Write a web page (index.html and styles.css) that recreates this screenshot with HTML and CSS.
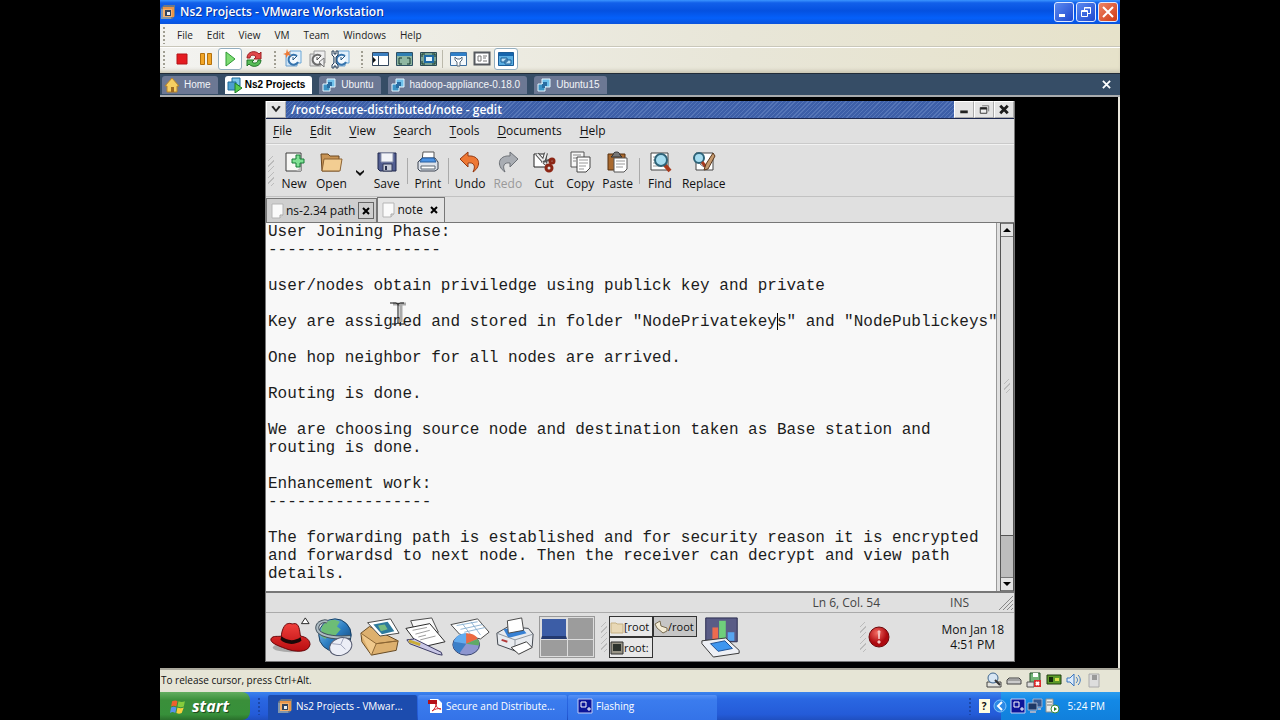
FILE: index.html
```html
<!DOCTYPE html>
<html lang="en">
<head>
<meta charset="utf-8">
<title>Ns2 Projects - VMware Workstation</title>
<link rel="stylesheet" href="styles.css">
</head>
<body>
<svg class="defs" aria-hidden="true">
  <defs>
    <symbol id="vmware" viewBox="0 0 16 16"><path d="M1 4 4 1h11v11l-3 3H1z" fill="#6a788a"/><path d="M3 3h11v10H3z" fill="#e8954a"/><path d="M1 5h10v10H1z" fill="#8296ab"/><path d="M3 5h9v8H3z" fill="#f4b06c"/><path d="M5 6h6v6H5z" fill="#33435c"/><path d="M7 8h3v3H7z" fill="#e9eef4"/></symbol>
    <symbol id="vm" viewBox="0 0 16 16"><path d="M6 2h8v8H6z" fill="#6fc0ea" stroke="#e6f6ff"/><path d="M2 7h7v7H2z" fill="#3b93c4" stroke="#e6f6ff"/><path d="M7 5h4v4H9v2H6V7h1z" fill="#2a6da2"/></symbol>
    <symbol id="snap" viewBox="0 0 20 20"><path d="M3 5h11v12H3z" fill="#cfe4f5" stroke="#6a9fce"/><path d="M7 2h11v12H7z" fill="#e4f1fb" stroke="#68a5d6"/><path d="M14 7a5 5 0 1 0 1 6" fill="#f4faff" stroke="#3674ad" stroke-width="2"/><path d="M10 8v3l4-4" fill="none" stroke="#28577f"/></symbol>
    <symbol id="page" viewBox="0 0 14 16"><path d="M2 1h11v11l-3 3H2z" fill="#fafafa" stroke="#b5b5b5"/><path d="M10 15v-3h3" fill="#ddd" stroke="#aaa"/></symbol>
    <symbol id="flash" viewBox="0 0 16 16"><path d="M1 1h14v14H1z" fill="#0c1599" stroke="#c3cdf5"/><path d="M4 4h5v5H4zM11 10h2v2h-2z" fill="none" stroke="#fff"/></symbol>
    <linearGradient id="ball" x1="0" y1="0" x2="1" y2="1"><stop offset="0" stop-color="#9cd6f5"/><stop offset=".5" stop-color="#2d7ec2"/><stop offset="1" stop-color="#0d3768"/></linearGradient>
    <linearGradient id="felt" x1="0" y1="0" x2="0" y2="1"><stop offset="0" stop-color="#f0403c"/><stop offset="1" stop-color="#b90d10"/></linearGradient>
    <radialGradient id="alert" cx=".4" cy=".3"><stop offset="0" stop-color="#f36a62"/><stop offset="1" stop-color="#ad0a10"/></radialGradient>
  </defs>
</svg>

<main class="host">
  <header class="titlebar">
    <svg class="i16"><use href="#vmware"/></svg>
    <h1 class="titlebar-text">Ns2 Projects - VMware Workstation</h1>
    <div class="captions">
      <button class="caption" aria-label="Minimize"><svg viewBox="0 0 18 18"><path d="M4 11h6v3H4z" fill="#fff"/></svg></button>
      <button class="caption" aria-label="Restore"><svg viewBox="0 0 18 18" fill="none" stroke="#fff"><path d="M7.5 8V4.500h6v6H11M7 5h7"/><path d="M4.500 7.500h6v6h-6zM4 8.500h7"/></svg></button>
      <button class="caption caption-close" aria-label="Close"><svg viewBox="0 0 18 18"><path d="m4 4 10 10m0-10-10 10" stroke="#fff" stroke-width="2"/></svg></button>
    </div>
  </header>

  <nav class="menubar" aria-label="VMware menu">
    <i class="dots"></i>
    <button>File</button><button>Edit</button><button>View</button><button>VM</button><button>Team</button><button>Windows</button><button>Help</button>
  </nav>

  <div class="tools" role="toolbar" aria-label="VMware toolbar">
    <i class="dots"></i>
    <div class="tool-group">
      <button class="tool" aria-label="Power off"><svg viewBox="0 0 20 20"><path d="M5 5h10v10H5z" fill="#e51b20" stroke="#b41216"/></svg></button>
      <button class="tool" aria-label="Suspend"><svg viewBox="0 0 20 20" fill="#f2a628" stroke="#b4720e"><path d="M4.500 4.500h4v11h-4zM11.500 4.500h4v11h-4z"/></svg></button>
      <button class="tool tool-on" aria-label="Power on"><svg viewBox="0 0 20 20"><path d="m6 3 9 7-9 7z" fill="#7fdc74" stroke="#2f9a35"/></svg></button>
      <button class="tool" aria-label="Reset"><svg viewBox="0 0 20 20"><path d="M3 9c0-7 9-8 12-4l2-2v7h-7l2-2C10 5 6 6 6 9z" fill="#e1474a" stroke="#9c2023"/><path d="M17 11c0 7-9 8-12 4l-2 2v-6h7l-2 2c2 2 6 1 6-2z" fill="#58bd58" stroke="#23752a"/></svg></button>
    </div>
    <i class="dots"></i>
    <div class="tool-group">
      <button class="tool" aria-label="Take snapshot"><svg viewBox="0 0 20 20"><use href="#snap"/><path d="m4 0 1 3 3-1-2 2 2 3-3-1-2 3V6L0 5l3-1z" fill="#ee7a35"/></svg></button>
      <button class="tool tool-off" aria-label="Revert snapshot"><svg viewBox="0 0 20 20"><use href="#snap"/><path d="m12 13 5-4v9z" fill="#eee" stroke="#777"/></svg></button>
      <button class="tool" aria-label="Manage snapshots"><svg viewBox="0 0 20 20"><use href="#snap"/><path d="M1 2v4l2 2v6l-2 2v3h2v-2h2v2h2v-3l-2-2V8l2-2V2H5v3H3V2z" fill="#eef3f8" stroke="#2b4058"/></svg></button>
    </div>
    <i class="dots"></i>
    <div class="tool-group">
      <button class="tool" aria-label="Sidebar"><svg viewBox="0 0 20 20"><path d="M2.500 3.500h16v13h-16z" fill="#fff" stroke="#34475c"/><path d="M3 4h15v3H3z" fill="#3b7fc0"/><path d="M8.500 7v9" stroke="#34475c"/><path d="m3 8 3 3-3 3z" fill="#111"/></svg></button>
      <button class="tool" aria-label="Quick switch"><svg viewBox="0 0 20 20"><path d="M2.500 3.500h16v13h-16z" fill="#8fb7a2" stroke="#2f5062"/><path d="M3 4h15v3H3z" fill="#2f7fb2"/><path d="M5 12V9h3m5 0h3v3m0 0v3h-3m-5 0H5v-3" fill="none" stroke="#17382f"/></svg></button>
      <button class="tool" aria-label="Full screen"><svg viewBox="0 0 20 20"><path d="M2.500 3.500h16v13h-16z" fill="#7ba494" stroke="#2b4a55"/><path d="M7 7h8v6H7z" fill="#e6f4fb" stroke="#1e6aa5" stroke-width="2"/><path d="M4 8V5h3m7 0h3v3m0 4v3h-3m-7 0H4v-3" fill="none" stroke="#17382f"/></svg></button>
    </div>
    <i class="rule"></i>
    <div class="tool-group">
      <button class="tool" aria-label="Settings"><svg viewBox="0 0 20 20"><path d="M2.500 3.500h16v13h-16z" fill="#f3f8fc" stroke="#3b6ea0"/><path d="M3 4h15v3H3z" fill="#2f7fc8"/><path d="M7 8v3l2 2v4h3v-4l2-2V8l-2 2H9z" fill="#fff" stroke="#57697b"/></svg></button>
      <button class="tool" aria-label="Console"><svg viewBox="0 0 20 20"><path d="M2.500 3.500h15v12h-15z" fill="#fff" stroke="#55595e" stroke-width="2"/><path d="M6 7h3v5H6zM11 7h4M11 9h3M11 12h4" fill="none" stroke="#777"/></svg></button>
      <button class="tool tool-on" aria-label="Unity"><svg viewBox="0 0 20 20"><path d="M2.500 3.500h15v13h-15z" fill="#5aaee2" stroke="#1b5d98"/><path d="M3 4h14v3H3z" fill="#1565ad"/><path d="M5 9h6v4H5zM9 11h6v4H9z" fill="#b9e0f7" stroke="#175a94"/></svg></button>
    </div>
  </div>

  <nav class="vmtabs" aria-label="Virtual machines">
    <button class="vmtab"><svg class="i16" viewBox="0 0 16 16"><path d="M1 9 8 1l7 8h-2v6H3V9z" fill="#f6cf62" stroke="#b8832a"/><path d="M7 10h3v5H7z" fill="#a06c22"/></svg>Home</button>
    <button class="vmtab vmtab-on"><svg class="i16" viewBox="0 0 16 16"><path d="M5 1h8v8H5z" fill="#7cc6ea" stroke="#1f6a9a"/><path d="M1 5h8v8H1z" fill="#4c9fd0" stroke="#1f6a9a"/><path d="m8 6 7 5-7 5z" fill="#58cc4c" stroke="#1c7a25"/></svg>Ns2 Projects</button>
    <button class="vmtab vmtab-vm"><svg class="i16"><use href="#vm"/></svg>Ubuntu</button>
    <button class="vmtab vmtab-vm"><svg class="i16"><use href="#vm"/></svg>hadoop-appliance-0.18.0</button>
    <button class="vmtab vmtab-vm"><svg class="i16"><use href="#vm"/></svg>Ubuntu15</button>
    <button class="vmtabs-close" aria-label="Close tab"><svg viewBox="0 0 10 10"><path d="m1 1 8 8m0-8-8 8" stroke="#fff" stroke-width="2"/></svg></button>
  </nav>

  <div class="screen">
    <section class="guest">
      <header class="gtitle">
        <button class="gbtn" aria-label="Window menu"><svg viewBox="0 0 16 16"><path d="m3 5 5 6 5-6-2-1-3 4-3-4z" fill="#222"/></svg></button>
        <h2 class="gtitle-text">/root/secure-distributed/note - gedit</h2>
        <button class="gbtn" aria-label="Minimize window"><svg viewBox="0 0 16 16"><path d="M4 9h8v3H4z" fill="#222"/></svg></button>
        <button class="gbtn" aria-label="Restore window"><svg viewBox="0 0 16 16"><path d="M6 4h7v6" fill="none" stroke="#777"/><path d="M4 6h7v6H4z" fill="#eee" stroke="#333"/><path d="M4 6h7v2H4z" fill="#222"/></svg></button>
        <button class="gbtn" aria-label="Close window"><svg viewBox="0 0 16 16"><path d="m4 4 8 8m0-8-8 8" stroke="#1c1c1c" stroke-width="3"/></svg></button>
      </header>

      <nav class="gmenu" aria-label="gedit menu">
        <button><u>F</u>ile</button><button><u>E</u>dit</button><button><u>V</u>iew</button><button><u>S</u>earch</button><button><u>T</u>ools</button><button><u>D</u>ocuments</button><button><u>H</u>elp</button>
      </nav>

      <div class="gtools" role="toolbar" aria-label="gedit toolbar">
        <i class="hatch"></i>
        <button class="gtool"><svg viewBox="0 0 24 24"><path d="M4 3h15v18H4z" fill="#f8f8f6" stroke="#3c3c3c"/><path d="M19 17v4h-5z" fill="#bbb"/><path d="M14 5h4v4h4v4h-4v4h-4v-4h-4V9h4z" fill="#7fe093" stroke="#167a36"/></svg>New</button>
        <button class="gtool"><svg viewBox="0 0 24 24"><path d="M2 4h7l2 2h9v15H3z" fill="#c89455" stroke="#6c4820"/><path d="M5 9h18l-2 12H3z" fill="#f2cd92" stroke="#8c6232"/></svg>Open</button>
        <button class="gdrop" aria-label="Recent files"><svg viewBox="0 0 10 24"><path d="m1 13 4 4 4-4v-2l-4 3-4-3z" fill="#111"/></svg></button>
        <button class="gtool"><svg viewBox="0 0 24 24"><path d="M3 3h18v18H5l-2-2z" fill="#535f92" stroke="#20284c"/><path d="M6 3h12v9H6z" fill="#f2f4f8" stroke="#8b93ab"/><path d="M8 14h9v7H8z" fill="#c7ccd8" stroke="#333b5b"/><path d="M10 16h2v4h-2z" fill="#28304e"/></svg>Save</button>
        <i class="grule"></i>
        <button class="gtool"><svg viewBox="0 0 24 24"><path d="M7 2h11v9H6z" fill="#fff" stroke="#555"/><path d="m2 12 4-4h13l3 4v7l-3 2H4l-2-2z" fill="#dde2ea" stroke="#3a4350"/><path d="M6 8h12l2 4H4z" fill="#4b93e4" stroke="#275d9e"/><path d="M5 16h14v3H5z" fill="#fff" stroke="#5b6672"/></svg>Print</button>
        <i class="grule"></i>
        <button class="gtool"><svg viewBox="0 0 24 24"><path d="M2 9 10 2v4c12-1 14 10 5 16 3-6 1-10-5-9v4z" fill="#ee7834" stroke="#923812"/></svg>Undo</button>
        <button class="gtool gtool-off"><svg viewBox="0 0 24 24"><path d="M22 9 14 2v4C2 5 0 16 9 22c-3-6-1-10 5-9v4z" fill="#a9adb3" stroke="#6d7177"/></svg>Redo</button>
        <button class="gtool"><svg viewBox="0 0 24 24"><path d="M2 4h12v13H2z" fill="#fff" stroke="#222"/><path d="m5 4 9 10M14 3l-3 10" stroke="#444" stroke-width="4"/><path d="m5 4 9 10M14 3l-3 10" stroke="#eee" stroke-width="2"/><path d="m11 12 9-3" stroke="#555" stroke-width="2"/><circle cx="17" cy="18" r="3" fill="none" stroke="#8c2615" stroke-width="3"/><circle cx="20" cy="11" r="2" fill="none" stroke="#8c2615" stroke-width="3"/></svg>Cut</button>
        <button class="gtool"><svg viewBox="0 0 24 24"><path d="M3 2h13v15H3z" fill="#f7f7f7" stroke="#555"/><path d="M5 5h8M5 8h4M5 11h3" stroke="#888"/><path d="M9 7h13v11l-4 4H9z" fill="#fff" stroke="#444"/><path d="M11 10h9M11 13h9M11 16h7M11 19h5" stroke="#999"/></svg>Copy</button>
        <button class="gtool"><svg viewBox="0 0 24 24"><path d="M2 4h17v16H2z" fill="#a9692e" stroke="#56300f"/><path d="M7 5c0-4 7-4 7 0l2 2H5z" fill="#777" stroke="#333"/><path d="M8 8h13v11l-3 3H8z" fill="#fff" stroke="#555"/><path d="M10 11h9M10 14h9M10 17h7" stroke="#999"/></svg>Paste</button>
        <i class="grule"></i>
        <button class="gtool"><svg viewBox="0 0 24 24"><path d="M3 3h17v17H3z" fill="#fff" stroke="#444"/><path d="M5 7h4M5 10h3M5 13h4M5 16h9" stroke="#999"/><path d="m16 14 6 7" stroke="#a83a1d" stroke-width="4"/><circle cx="13" cy="10" r="6" fill="#a5dcf0" stroke="#2e6378" stroke-width="2"/></svg>Find</button>
        <button class="gtool"><svg viewBox="0 0 24 24"><path d="M4 3h17v17H4z" fill="#fff" stroke="#444"/><path d="m8 14 4 3 3-3" fill="none" stroke="#666"/><circle cx="7" cy="8" r="5" fill="#a5dcf0" stroke="#2e6378" stroke-width="2"/><path d="m10 12 4 5" stroke="#a83a1d" stroke-width="3"/><path d="m21 3 2 3-7 13-4 1 2-6z" fill="#c69a6e" stroke="#5a3a20"/></svg>Replace</button>
      </div>

      <div class="gtabs">
        <div class="gtab"><svg class="gpage"><use href="#page"/></svg>ns-2.34 path<button class="gx gx-box" aria-label="Close ns-2.34 path"><svg viewBox="0 0 8 8"><path d="m1 1 6 6m0-6-6 6" stroke="#000" stroke-width="2"/></svg></button></div>
        <div class="gtab gtab-on"><svg class="gpage"><use href="#page"/></svg>note<button class="gx" aria-label="Close note"><svg viewBox="0 0 8 8"><path d="m1 1 6 6m0-6-6 6" stroke="#000" stroke-width="2"/></svg></button></div>
      </div>

      <div class="editor">
        <div class="paper">
          <textarea class="note" aria-label="note" wrap="off" spellcheck="false">User Joining Phase:
------------------

user/nodes obtain priviledge using publick key and private

Key are assigned and stored in folder "NodePrivatekeys" and "NodePublickeys"

One hop neighbor for all nodes are arrived.

Routing is done.

We are choosing source node and destination taken as Base station and
routing is done.

Enhancement work:
-----------------

The forwarding path is established and for security reason it is encrypted
and forwardsd to next node. Then the receiver can decrypt and view path
details.</textarea>
          <i class="caret"></i>
          <svg class="ibeam" viewBox="0 0 24 24" fill="none"><path d="M7 2h5l2 1 2-1h4M15 3v17" stroke="#aaa" stroke-width="3"/><path d="M4 1h6l2 1 2-1h4M12 2v19M6 22h4l2-1 2 1h4" stroke="#111"/></svg>
        </div>
        <div class="scroll">
          <button class="scroll-btn" aria-label="Scroll up"><svg viewBox="0 0 10 10"><path d="m1 7 4-4 4 4z"/></svg></button>
          <div class="thumb"><i class="hatch hatch-small"></i></div>
          <div class="trough"></div>
          <button class="scroll-btn" aria-label="Scroll down"><svg viewBox="0 0 10 10"><path d="m1 3 4 4 4-4z"/></svg></button>
        </div>
      </div>

      <div class="gstatus"><span>Ln 6, Col. 54</span><span>INS</span><svg class="resize" viewBox="0 0 16 16" stroke="#888"><path d="M1 15 15 1M5 15 15 5M9 15l6-6M13 15l2-2"/></svg></div>

      <footer class="panel">
        <div class="launchers">
          <button class="launch" aria-label="Main menu"><svg viewBox="0 0 44 44"><ellipse cx="23" cy="33" rx="19" ry="5" fill="#aaa"/><path d="M2 24c2-4 8-2 11-3 0-5 3-13 7-13 3-1 3 1 6 0 6-1 6 8 7 13 7 1 10 5 10 9-2 9-16 8-26 4C9 31 1 28 2 24z" fill="url(#felt)" stroke="#650609"/><path d="M13 21c5 5 14 6 20 1l1 4c-7 5-17 4-22-1z" fill="#1c0808"/><path d="M34 8l4-6 4 6z" fill="#fff" stroke="#222"/></svg></button>
          <button class="launch" aria-label="Web browser"><svg viewBox="0 0 44 44"><circle cx="22" cy="20" r="17" fill="url(#ball)" stroke="#123a5e"/><path d="M8 12c5-9 14-9 19-6l-3 5 4 3-6 7-6-2-4 5-5-3z" fill="#6dbd76"/><path d="M5 8C-2 18 14 24 38 22M5 8c4-3 7-3 9-2" fill="none" stroke="#46545e" stroke-width="4"/><path d="M5 8C-2 18 14 24 38 22M5 8c4-3 7-3 9-2" fill="none" stroke="#aebcc4" stroke-width="2"/><ellipse cx="28" cy="32" rx="12" ry="9" transform="rotate(-20 28 32)" fill="#eceef6" stroke="#555b70"/><path d="m19 29 9 1 3-7M28 30l5 5" fill="none" stroke="#9da3b9"/></svg></button>
          <button class="launch" aria-label="Email"><svg viewBox="0 0 44 44"><path d="m2 18 9-7 30 15-2 10-26 5L3 27z" fill="#ddb06e" stroke="#61451f"/><path d="m2 18 16 11 23-3-23 3-5 12" fill="#f0c98c" stroke="#8a6532"/><path d="m9 7 24-4 9 15-20 3z" fill="#fff" stroke="#444"/><path d="m15 9 15-3 7 10-13 3z" fill="#2d7a9d"/><path d="m20 10 7-1 3 5-7 2z" fill="#76bb80"/></svg></button>
          <button class="launch" aria-label="Writer"><svg viewBox="0 0 44 44"><path d="m7 5 22-3 7 15-22 5z" fill="#f8f8f8" stroke="#444"/><path d="m2 13 25-5 16 19-26 6z" fill="#fff" stroke="#222"/><path d="m9 15 15-3M12 19l15-4M15 22l8-2M17 25l16-4" stroke="#999"/><path d="m3 25 8-1 28 14 1 3-5-1L6 29z" fill="#c9c7e6" stroke="#37355e"/><path d="m5 26 12 4" stroke="#caad38" stroke-width="3"/></svg></button>
          <button class="launch" aria-label="Presentation"><svg viewBox="0 0 44 44"><path d="m2 9 28-6 12 14-9 7-22-5z" fill="#fff" stroke="#444"/><path d="m8 10 22-4M12 14l23-5M16 17l22-5M14 8l9 12M23 6l10 14" stroke="#8db2d2"/><ellipse cx="18" cy="30" rx="14" ry="11" fill="#8e96cf" stroke="#344169"/><path d="M18 29 5 27c2-7 8-9 13-9z" fill="#62acef"/><path d="M18 29V18c7 0 11 3 12 6z" fill="#ec6a42"/><path d="m18 29-7 10c-6-3-8-8-6-12z" fill="#3c7fc8"/><path d="m18 29 12-5c2 2 2 5 1 7z" fill="#5faa66"/></svg></button>
          <button class="launch" aria-label="Print manager"><svg viewBox="0 0 44 44"><path d="m3 18 12-7 21 2 5 6-1 13-14 6L4 30z" fill="#e8ebef" stroke="#3c4148"/><path d="m10 14 18-3 6 7-19 5z" fill="#3781d4"/><path d="m14 5 15-3 2 13-16 3z" fill="#fff" stroke="#444"/><path d="m3 18 19 7 19-6M22 25v12" fill="none" stroke="#8d949c"/><path d="m18 33 16-6 6 6-14 7z" fill="#fff" stroke="#333"/><path d="m8 25 6 2" stroke="#b13a3a" stroke-width="2"/></svg></button>
        </div>
        <div class="pager"><button class="desk desk-on" aria-label="Workspace 1"></button><button class="desk" aria-label="Workspace 2"></button><button class="desk" aria-label="Workspace 3"></button><button class="desk" aria-label="Workspace 4"></button></div>
        <i class="hatch"></i>
        <div class="gtasks">
          <button class="gtask"><svg viewBox="0 0 14 14"><path d="M1 3h5l1 1h6v9H1z" fill="#e8d8b6" stroke="#c6b184"/></svg>[root</button>
          <button class="gtask gtask-on"><svg viewBox="0 0 14 14"><path d="m1 4 5-3 1 5 6 2v3l-4 2-6-5z" fill="#f4ecd5" stroke="#786c50"/></svg>/root</button>
          <button class="gtask"><svg viewBox="0 0 14 14"><path d="M1 1h12v12H1z" fill="#999587" stroke="#333"/><path d="M3 3h8v7H3z" fill="#2d332e"/></svg>root:</button>
        </div>
        <button class="launch launch-mon" aria-label="System monitor"><svg viewBox="0 0 44 44"><path d="M6 2h33v25H6z" fill="#5a5c86" stroke="#27294d"/><path d="M13 12h6v14h-6z" fill="#ec6b4f"/><path d="M20 5h7v21h-7z" fill="#6fcf7b"/><path d="M29 17h7v9h-7z" fill="#57a5f0"/><path d="m2 26 25-3 14 13v3l-27 4L2 29z" fill="#eef0f5" stroke="#333"/><path d="m11 29 15-3 8 8-15 3z" fill="#3e96ef" stroke="#1c4f93"/></svg></button>
        <i class="hatch push"></i>
        <svg class="alert" viewBox="0 0 22 22"><circle cx="11" cy="11" r="10" fill="url(#alert)" stroke="#6e080b"/><path d="M10 5h2l-1 8zM10 15h2v2h-2z" fill="#f5c6c4" stroke="#f5c6c4"/></svg>
        <div class="gclock">Mon Jan 18<br>4:51 PM</div>
      </footer>
    </section>
  </div>

  <div class="hint">
    <span>To release cursor, press Ctrl+Alt.</span>
    <div class="devices">
      <svg viewBox="0 0 16 16"><path d="M1 10h14v5H1z" fill="#e4e4de" stroke="#444"/><circle cx="7" cy="6" r="5" fill="#d7e6f4" stroke="#3f6790"/><path d="m9 8 5 5" stroke="#333" stroke-width="2"/></svg>
      <svg viewBox="0 0 16 16"><path d="m1 8 2-2h10l2 2v4H1z" fill="#ccc" stroke="#444"/><path d="M2 8h12" stroke="#777"/></svg>
      <svg viewBox="0 0 16 16"><path d="M4 1h10v10H4z" fill="#73b578" stroke="#24502a"/><path d="M7 1h5v4H7z" fill="#fff"/><path d="M1 10h7v5H1z" fill="#ddd" stroke="#555"/><path d="M8 8h7v7H8z" fill="#d92d2d"/><path d="m10 10 3 3m0-3-3 3" stroke="#fff" stroke-width="2"/></svg>
      <svg viewBox="0 0 16 16"><path d="M1 3h14v9H1z" fill="#5d9b2a" stroke="#1f3d10"/><path d="M3 5h4v5H3z" fill="#152a0c"/><path d="M9 6h4v3H9z" fill="#dbe04d"/></svg>
      <svg viewBox="0 0 16 16" fill="none" stroke="#3a77c0"><path d="M1 6h3l4-4v12l-4-4H1z" fill="#dcebfa"/><path d="M10 5c2 2 2 4 0 6M12 3c3 3 3 7 0 10"/></svg>
      <svg viewBox="0 0 16 16"><path d="M3 2h10v13H3z" fill="#ddd" stroke="#aaa"/><path d="M6 3h5v5H6z" fill="#999"/></svg>
    </div>
  </div>

  <footer class="taskbar">
    <button class="start"><svg viewBox="0 0 16 16"><path d="M2 3c2-1 4-1 5 0L6 8C4 7 3 7 1 8z" fill="#f0602c"/><path d="M8 3c2 1 4 1 6 0l-1 5c-2 1-4 1-6 0z" fill="#86cc3c"/><path d="M1 9c2-1 3-1 5 0l-1 5c-2-1-3-1-5 0z" fill="#5792ec"/><path d="M7 9c2 1 4 1 6 0l-2 5c-2 1-3 1-5 0z" fill="#f8cf3c"/></svg>start</button>
    <i class="dots dots-dark"></i>
    <div class="tasks">
      <button class="task task-on"><svg class="i16"><use href="#vmware"/></svg><span>Ns2 Projects - VMwar...</span></button>
      <button class="task"><svg class="i16" viewBox="0 0 16 16"><path d="M3 1h8l4 4v10H3z" fill="#fff"/><path d="M1 2h9v4H1z" fill="#b50f16"/><path d="M5 13c3-2 4-5 4-7 0 3 2 5 5 5-3-1-6 0-9 2z" fill="none" stroke="#d2242b"/></svg><span>Secure and Distribute...</span></button>
      <button class="task"><svg class="i16"><use href="#flash"/></svg><span>Flashing</span></button>
    </div>
    <i class="dots dots-dark"></i>
    <button class="help" aria-label="Help">?</button>
    <div class="tray">
      <button class="chev" aria-label="Show hidden icons"><svg viewBox="0 0 14 14"><circle cx="7" cy="7" r="6" fill="#2d8ae6" stroke="#7fc3fa"/><path d="M9 3 5 7l4 4" fill="none" stroke="#fff" stroke-width="2"/></svg></button>
      <svg class="i16"><use href="#flash"/></svg>
      <svg class="i16" viewBox="0 0 16 16"><path d="M6 1h9v8H6z" fill="#34578f" stroke="#9fb0cc"/><path d="M1 5h9v7H1z" fill="#1d3765" stroke="#9fb0cc"/><path d="M3 14h6M11 11h3" stroke="#9fb0cc" stroke-width="2"/></svg>
      <svg class="i16" viewBox="0 0 16 16"><path d="M2 1h7v13H2z" fill="#e9ebe8" stroke="#8a9090"/><path d="M3 4h5M3 7h5" stroke="#777"/><circle cx="11" cy="11" r="4" fill="#fff" stroke="#3a8a3a"/><path d="m10 9 3 2-3 2z" fill="#237a23"/></svg>
      <time class="clock">5:24 PM</time>
    </div>
  </footer>
</main>
</body>
</html>
```

FILE: styles.css
```css
* { box-sizing: border-box; }
body { margin: 0; background: #000; font: 10px/14px "Open Sans", "Noto Sans", sans-serif; color: #111; }
button { margin: 0; padding: 0; border: 0; background: none; font: inherit; color: inherit; white-space: nowrap; }
h1, h2 { margin: 0; }
svg { display: block; flex: none; }
.defs { position: absolute; width: 0; height: 0; }
.i16 { width: 16px; height: 16px; }

.host { display: flex; flex-direction: column; width: 75%; min-height: 100vh; margin: 0 auto; }

.titlebar { display: flex; align-items: center; gap: 4px; height: 24px; padding: 0 2px 0 0; background: linear-gradient(#3b95ff 0, #1260ea 12%, #0551e0 45%, #0560fa 75%, #0a53dc); color: #fff; }
.titlebar-text { flex: 1; font: 600 12px/16px "Open Sans", sans-serif; text-shadow: 1px 1px #0a3296; }
.captions { display: flex; gap: 2px; }
.caption { width: 20px; height: 20px; border: 1px solid #dfe9ff; border-radius: 3px; background: linear-gradient(135deg, #5b8af0, #1e47cf); }
.caption svg { width: 18px; height: 18px; }
.caption-close { background: linear-gradient(135deg, #ee8566, #cf3a14); }

.menubar, .tools { display: flex; align-items: center; background: linear-gradient(90deg, #f3f3f0, #e8e6d8 60%, #e6e2ca); }
.menubar { height: 23px; border-bottom: 1px solid #c9c7ba; color: #222; }
.menubar button { padding: 0 7px; }
.menubar .dots { margin-right: 5px; }
.dots { width: 2px; height: 17px; margin: 0 3px; background: repeating-linear-gradient(#a09e92 0 2px, transparent 2px 4px); }
.tools { height: 26px; padding-bottom: 3px; border-top: 1px solid #fff; box-shadow: inset 0 -4px 4px -2px #c4c0ac; }
.tool-group { display: flex; margin: 0 5px 0 2px; }
.tool { display: grid; place-items: center; width: 24px; height: 22px; border: 1px solid transparent; border-radius: 3px; }
.tool svg { width: 20px; height: 20px; }
.tool-on { border-color: #93aebf; background: #fff; }
.tool-off { filter: grayscale(1); }
.rule { width: 1px; height: 18px; margin: 0 1px 0 -3px; background: #bbb9ab; }

.vmtabs { display: flex; align-items: flex-end; height: 24px; padding: 0 9px 1px 2px; border-top: 1px solid #222c38; border-bottom: 2px solid #a9acae; background: #364d66; font: 10px/14px "Liberation Sans", sans-serif; }
.vmtab { display: flex; align-items: center; gap: 4px; height: 18px; margin-right: 7px; padding: 0 7px 0 2px; border-radius: 3px 3px 0 0; background: #6c7894; color: #f2f4f8; }
.vmtab-on { gap: 2px; background: #fff; color: #000; font-weight: bold; }
.vmtabs-close { margin: 0 0 0 auto; align-self: center; }
.vmtabs-close svg { width: 9px; height: 9px; }

.screen { flex: 1; display: flex; padding: 4px 103px 6px 105px; border-right: 2px solid #e8e6dc; background: #000; }
.guest { flex: 1; display: flex; flex-direction: column; min-width: 0; border: 1px solid #777; border-width: 0 1px 1px; background: #e0e0e0; font-size: 12px; line-height: 16px; }

.gtitle { display: flex; align-items: center; height: 18px; border-bottom: 1px solid #1c2850; background: repeating-linear-gradient(135deg, #3d5fa8 0 2px, #5676b8 2px 3px); color: #fff; }
.gtitle-text { flex: 1; padding-left: 5px; font: 600 12px/16px "Open Sans", sans-serif; }
.gbtn { width: 20px; height: 17px; border: 1px solid #bbb; border-color: #fff #aaa #aaa #fff; background: #e4e4e4; }
.gbtn svg { width: 16px; height: 15px; margin: 0 auto; }

.gmenu { display: flex; align-items: center; height: 25px; border-bottom: 1px solid #cacaca; }
.gmenu button { padding: 0 9px; }
.gmenu button:first-child { padding-left: 7px; }
.gmenu u { text-underline-offset: 2px; }

.gtools { display: flex; align-items: center; height: 53px; padding-top: 1px; border-top: 1px solid #f2f2f2; border-bottom: 1px solid #c2c2c2; }
.gtool { display: flex; flex-direction: column; align-items: center; gap: 2px; min-width: 36px; padding: 0 4px; }
.gtool svg { width: 24px; height: 24px; }
.gtool-off { color: #999; }
.gdrop { width: 18px; height: 36px; }
.gdrop svg { width: 10px; height: 24px; margin: 0 auto; }
.grule { width: 1px; height: 26px; margin: 0 2px; background: #aaa; }
.hatch { flex: none; width: 6px; height: 30px; margin: 0 2px; background: repeating-linear-gradient(135deg, transparent 0 3px, #bbb 3px 4px); }

.gtabs { display: flex; align-items: flex-end; height: 26px; border-bottom: 1px solid #777; }
.gtab { display: flex; align-items: center; height: 24px; padding: 0 2px 0 3px; border: 1px solid #777; border-bottom: 0; background: #cfcfcf; }
.gtab-on { height: 25px; background: #e4e4e4; }
.gpage { width: 14px; height: 16px; margin-right: 2px; }
.gx { display: grid; place-items: center; width: 16px; height: 17px; margin-left: 3px; }
.gx-box { border: 1px solid #666; }
.gx svg { width: 8px; height: 8px; }

.editor { flex: 1; display: flex; border-bottom: 2px solid #777; }
.paper { position: relative; flex: 1; display: flex; font: 16px/18px "Liberation Mono", monospace; border-right: 1px solid #999; background: #f8f8f8; }
.note { flex: 1; width: 100%; margin: 0; padding: 0 0 0 2px; border: 0; outline: 0; resize: none; overflow: hidden; background: none; font: inherit; color: #1c1c1c; white-space: pre; }
.caret { position: absolute; left: calc(2px + 53ch); top: 90px; width: 1px; height: 17px; background: #000; }
.ibeam { position: absolute; left: 120px; top: 79px; width: 24px; height: 24px; }
.scroll { display: flex; flex-direction: column; width: 14px; margin-left: 3px; border: 1px solid #555; border-width: 0 1px; background: #bdbdbd; }
.scroll-btn { height: 14px; border: 1px solid #777; border-width: 1px 0; background: #e4e4e4; }
.scroll-btn svg { width: 10px; height: 10px; margin: 0 auto; }
.thumb { flex: 307; display: grid; place-items: center; border-bottom: 1px solid #555; background: #dedede; }
.trough { flex: 42; }
.hatch-small { height: 14px; }

.gstatus { display: flex; justify-content: flex-end; align-items: center; height: 20px; border-bottom: 1px solid #aaa; color: #444; }
.gstatus span:first-child { margin-right: 70px; }
.gstatus .resize { width: 16px; height: 16px; margin-left: 29px; }

.panel { display: flex; align-items: center; height: 48px; padding: 0 10px 0 3px; }
.launchers { display: flex; gap: 3px; }
.launch svg { width: 42px; height: 42px; }
.pager { display: grid; grid-template-columns: 1fr 1fr; gap: 1px; width: 56px; height: 42px; margin: 0 4px 0 3px; padding: 1px; border: 1px solid #999; background: #ddd; }
.desk { background: #9c9c9c; }
.desk-on { border: 1px solid #ddd; border-bottom: 3px solid #243a70; background: #3c5da6; }
.gtasks { display: grid; grid-template-columns: 44px 44px; font-size: 11px; }
.gtask { display: flex; align-items: center; height: 21px; border: 1px solid #333; background: #e8e8e8; }
.gtask-on { background: #c6c6c6; }
.gtask svg { width: 14px; height: 14px; }
.launch-mon { margin-left: 3px; }
.push { margin-left: auto; }
.alert { width: 22px; height: 22px; margin-right: 51px; }
.gclock { line-height: 15px; text-align: center; }

.hint { display: flex; align-items: center; justify-content: space-between; height: 24px; padding: 0 18px 2px 1px; border-top: 2px solid #aaa89c; background: #e6e5d6; }
.devices { display: flex; gap: 4px; }
.devices svg { width: 16px; height: 16px; }

.taskbar { display: flex; align-items: center; height: 28px; background: linear-gradient(#3a83ee 0, #2a67e2 25%, #245bd8 80%, #1f4fc0); color: #fff; }
.start { display: flex; align-items: center; gap: 5px; width: 90px; height: 28px; padding-left: 10px; border-radius: 0 8px 8px 0; background: linear-gradient(#63ae60, #3a8f3a 30%, #37903a 80%, #2a6f2c); font: italic bold 16px/20px "Open Sans", sans-serif; text-shadow: 1px 1px #1e4d20; }
.start svg { width: 17px; height: 17px; }
.dots-dark { margin: 0 8px; background: repeating-linear-gradient(#1b47a8 0 2px, transparent 2px 4px); }
.tasks { flex: 1; display: flex; gap: 1px; align-self: flex-end; }
.task { display: flex; align-items: center; gap: 3px; width: 149px; height: 25px; padding: 0 0 3px 9px; border-radius: 2px 2px 0 0; background: linear-gradient(#5591f6, #3b7cee 20%, #3473e8); }
.task-on { background: #1c4cae; }
.help { width: 11px; height: 14px; margin-right: 11px; background: #fffbe0; color: #111; font-weight: bold; line-height: 14px; }
.tray { display: flex; align-items: center; gap: 1px; height: 28px; padding-right: 15px; background: linear-gradient(#2a9cf0, #1389e6 30%, #1180dc); }
.chev { margin: 0 2px 0 -8px; }
.chev svg { width: 14px; height: 14px; }
.clock { margin-left: 7px; }
```
